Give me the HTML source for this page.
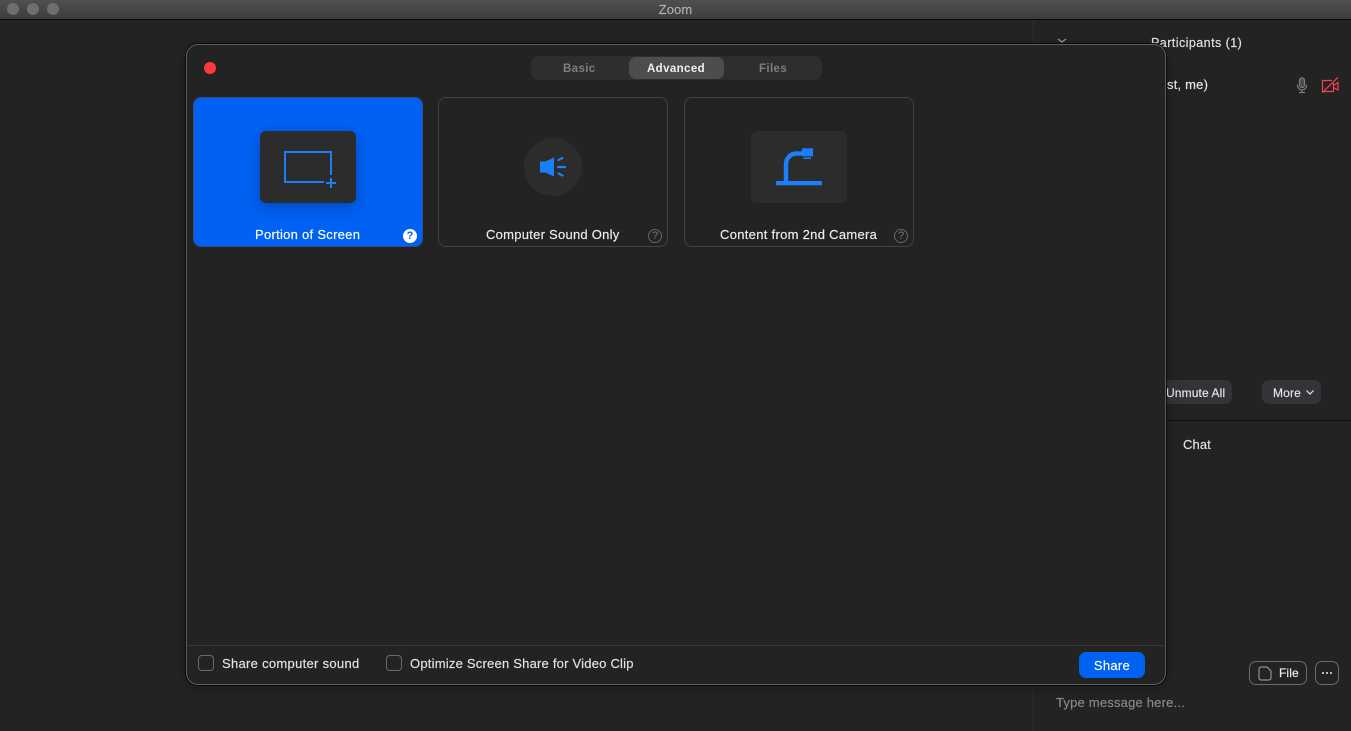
<!DOCTYPE html>
<html>
<head>
<meta charset="utf-8">
<style>
html,body{margin:0;padding:0;background:#232323;}
#p{position:relative;width:1351px;height:731px;overflow:hidden;background:#232323;font-family:"Liberation Sans",sans-serif;color:#e8e8e8;}
.a{position:absolute;}
.t{position:absolute;white-space:nowrap;font-size:13px;line-height:16px;letter-spacing:.28px;-webkit-text-stroke:.15px currentColor;}
.card{position:absolute;top:97px;width:228px;height:148px;border:1px solid #424242;border-radius:8px;background:#232323;}
.dot{position:absolute;top:3px;width:12px;height:12px;border-radius:50%;background:#6e6e70;}
.cb{position:absolute;top:655px;width:14px;height:14px;border:1px solid #6a6a6c;border-radius:4px;}
.q{position:absolute;top:229px;width:14px;height:14px;border-radius:50%;font-size:11px;line-height:14px;text-align:center;font-weight:bold;}
.tab{font-size:11.5px;font-weight:bold;letter-spacing:.38px;top:61px;-webkit-text-stroke:0;}
</style>
</head>
<body>
<div id="p">
  <!-- title bar -->
  <div class="a" style="left:0;top:0;width:1351px;height:19px;background:linear-gradient(#504f51,#3c3c3e);border-bottom:1px solid #0c0c0c;"></div>
  <div class="dot" style="left:7px;"></div>
  <div class="dot" style="left:27px;"></div>
  <div class="dot" style="left:47px;"></div>
  <div class="t" style="left:0;width:1351px;top:2px;text-align:center;color:#b0b0b0;letter-spacing:.1px;">Zoom</div>

  <!-- right side panel -->
  <div class="a" style="left:1033px;top:20px;width:1px;height:711px;background:#2e2e2e;"></div>
  <div class="t" style="left:1151px;top:35px;font-size:12.5px;color:#e4e4e4;letter-spacing:.45px;">Participants (1)</div>
  <div class="t" style="left:1167px;top:77px;font-size:13px;color:#e8e8e8;letter-spacing:.2px;">st, me)</div>
  <svg class="a" style="left:1295px;top:77px;" width="14" height="17" viewBox="0 0 14 17" fill="none" stroke="#7e7e7e" stroke-width="1.2">
    <rect x="4.500" y="1" width="5" height="9.500" rx="2.500" fill="#4a4a4a"/>
    <path d="M2.500 7.500v1a4.500 4.500 0 0 0 9 0v-1M7 13v2.500M4 15.500h6"/>
  </svg>
  <svg class="a" style="left:1320px;top:76px;" width="20" height="18" viewBox="0 0 20 18" fill="none" stroke="#f2444c" stroke-width="1.2">
    <path d="M12 4.500H2.500v11h11V7M13.500 9.500l4.500-3v7.500l-4.500-2.500M18 1.300L2.300 16.700"/>
  </svg>
  <div class="a" style="left:1150px;top:380px;width:82px;height:24px;background:#333437;border-radius:7px;"></div>
  <div class="t" style="left:1166px;top:385px;font-size:12px;color:#e8e8e8;letter-spacing:.12px;">Unmute All</div>
  <div class="a" style="left:1262px;top:380px;width:59px;height:24px;background:#333437;border-radius:7px;"></div>
  <div class="t" style="left:1273px;top:385px;font-size:12px;color:#e8e8e8;letter-spacing:.15px;">More</div>
  <svg class="a" style="left:1305px;top:389px;" width="10" height="7" viewBox="0 0 10 7" fill="none" stroke="#e8e8e8" stroke-width="1.200"><path d="M1.500 1.500l3.500 3.500 3.500-3.500"/></svg>
  <div class="a" style="left:1034px;top:420px;width:317px;height:1px;background:#0e0e0e;"></div>
  <div class="t" style="left:1183px;top:437px;font-size:13px;color:#e0e0e0;letter-spacing:.1px;">Chat</div>
  <div class="a" style="left:1249px;top:661px;width:56px;height:22px;border:1px solid #6a6a6a;border-radius:7px;"></div>
  <svg class="a" style="left:1258px;top:665px;" width="14" height="16" viewBox="0 0 14 16" fill="none" stroke="#a8a8a8" stroke-width="1"><path d="M3 2h6l4 4v7a2 2 0 0 1-2 2H3a2 2 0 0 1-2-2V4a2 2 0 0 1 2-2z"/></svg>
  <div class="t" style="left:1279px;top:665px;font-size:12px;color:#f0f0f0;letter-spacing:.1px;">File</div>
  <div class="a" style="left:1315px;top:661px;width:22px;height:22px;border:1px solid #6a6a6a;border-radius:7px;"></div>
  <div class="a" style="left:1322px;top:672px;width:2px;height:2px;background:#eee;border-radius:50%;box-shadow:4px 0 0 #eee,8px 0 0 #eee;"></div>
  <div class="t" style="left:1056px;top:695px;font-size:13px;color:#8a8a8a;letter-spacing:.2px;">Type message here...</div>
  <svg class="a" style="left:1056px;top:38px;" width="12" height="6" viewBox="0 0 12 6" fill="none" stroke="#9a9a9a" stroke-width="1.200"><path d="M2 1l4 3 4-3"/></svg>

  <!-- modal -->
  <div class="a" style="left:186px;top:44px;width:978px;height:639px;background:#232323;border:1px solid #5f5f5f;border-radius:12px;box-shadow:0 0 0 1px #0a0a0a,0 4px 14px rgba(0,0,0,.25);"></div>
  <div class="a" style="left:204px;top:62px;width:12px;height:12px;border-radius:50%;background:#fc3a38;"></div>

  <!-- tabs -->
  <div class="a" style="left:531px;top:56px;width:291px;height:24px;background:#2e2e2e;border-radius:8px;"></div>
  <div class="a" style="left:629px;top:57px;width:95px;height:22px;background:#4d4d4d;border-radius:7px;"></div>
  <div class="t tab" style="left:563px;color:#7e7e7e;">Basic</div>
  <div class="t tab" style="left:647px;color:#f0f0f0;">Advanced</div>
  <div class="t tab" style="left:759px;color:#7e7e7e;">Files</div>

  <!-- cards -->
  <div class="card" style="left:193px;background:#0061f2;border-color:#2f4f7f;"></div>
  <div class="card" style="left:438px;"></div>
  <div class="card" style="left:684px;"></div>

  <div class="a" style="left:260px;top:131px;width:96px;height:72px;background:#2c2c2c;border-radius:6px;box-shadow:0 4px 14px rgba(0,30,90,.35);"></div>
  <svg class="a" style="left:260px;top:131px;" width="96" height="72" viewBox="0 0 96 72" fill="none" stroke="#1b7ffa" stroke-width="2">
    <path d="M64 51H25V21H71V44"/>
    <path d="M66 52h10M71 47v10"/>
  </svg>

  <div class="a" style="left:524px;top:138px;width:58px;height:58px;background:#2c2c2c;border-radius:50%;"></div>
  <svg class="a" style="left:524px;top:138px;" width="58" height="58" viewBox="0 0 58 58">
    <path d="M16 23.500h5.500l8.500-4v19l-8.500-4H16z" fill="#1b7ffa"/>
    <path d="M34.500 22l4-2M34 29h7M34.500 35.500l4 2" stroke="#1b7ffa" stroke-width="2.200" stroke-linecap="round" fill="none"/>
  </svg>

  <div class="a" style="left:751px;top:131px;width:96px;height:72px;background:#2c2c2c;border-radius:6px;"></div>
  <svg class="a" style="left:751px;top:131px;" width="96" height="72" viewBox="0 0 96 72">
    <rect x="25" y="50" width="46" height="4.300" fill="#1b7ffa"/>
    <path d="M35 51V33a10.500 10.500 0 0 1 10.500-10.500H52" fill="none" stroke="#1b7ffa" stroke-width="4.500"/>
    <rect x="51" y="17.300" width="11" height="8" fill="#1b7ffa"/>
    <rect x="52.500" y="26.500" width="7.500" height="1.500" fill="#1b7ffa"/>
  </svg>

  <!-- labels -->
  <div class="t" style="left:255px;top:227px;color:#fff;">Portion of Screen</div>
  <div class="t" style="left:486px;top:227px;color:#eee;letter-spacing:.26px;">Computer Sound Only</div>
  <div class="t" style="left:720px;top:227px;color:#eee;letter-spacing:.3px;">Content from 2nd Camera</div>
  <div class="q" style="left:403px;background:#fff;color:#0061f2;">?</div>
  <div class="q" style="left:648px;border:1px solid #66666c;width:12px;height:12px;line-height:12px;color:#77777c;font-weight:normal;">?</div>
  <div class="q" style="left:894px;border:1px solid #66666c;width:12px;height:12px;line-height:12px;color:#77777c;font-weight:normal;">?</div>

  <!-- footer -->
  <div class="a" style="left:187px;top:645px;width:977px;height:1px;background:#383838;"></div>
  <div class="cb" style="left:198px;"></div>
  <div class="t" style="left:222px;top:656px;color:#e4e4e4;letter-spacing:.3px;">Share computer sound</div>
  <div class="cb" style="left:386px;"></div>
  <div class="t" style="left:410px;top:656px;color:#e4e4e4;letter-spacing:.22px;">Optimize Screen Share for Video Clip</div>
  <div class="a" style="left:1079px;top:652px;width:66px;height:26px;background:#0061f2;border-radius:7px;"></div>
  <div class="t" style="left:1079px;width:66px;top:658px;text-align:center;color:#fff;letter-spacing:.3px;">Share</div>
</div>
</body>
</html>
